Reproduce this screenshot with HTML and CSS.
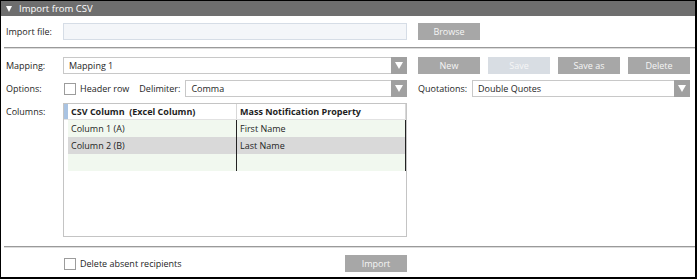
FILE: index.html
```html
<!DOCTYPE html>
<html lang="en">
<head>
  <meta charset="UTF-8" />
  <title>Import from CSV</title>
  <link rel="stylesheet" href="styles.css">
</head>
<body>
  <div class="panel">
    <!-- header bar -->
    <div class="panel-header"><span class="caret"></span>Import from CSV</div>

    <!-- file row -->
    <div class="row row-file">
      <span class="label">Import file:</span>
      <div class="input wide"></div>
      <button class="btn">Browse</button>
    </div>

    <div class="sep"></div>

    <!-- mapping row -->
    <div class="row row-mapping">
      <span class="label">Mapping:</span>
      <div class="select wide">
        <span class="select-text">Mapping 1</span>
        <span class="arrow"></span>
      </div>
      <div class="btn-group">
        <button class="btn">New</button>
        <button class="btn disabled">Save</button>
        <button class="btn">Save as</button>
        <button class="btn">Delete</button>
      </div>
    </div>

    <!-- options row -->
    <div class="row row-options">
      <span class="label">Options:</span>
      <div class="options-left">
        <span class="check"></span>
        <span class="check-label">Header row</span>
        <span class="delim-label">Delimiter:</span>
        <div class="select delim">
          <span class="select-text">Comma</span>
          <span class="arrow"></span>
        </div>
      </div>
      <span class="quot-label">Quotations:</span>
      <div class="select quot">
        <span class="select-text">Double Quotes</span>
        <span class="arrow"></span>
      </div>
    </div>

    <!-- columns row -->
    <div class="row row-columns">
      <span class="label">Columns:</span>
      <div class="grid">
        <div class="grid-row grid-head">
          <span class="rh"></span>
          <span class="c1">CSV Column&nbsp; (Excel Column)</span>
          <span class="c2">Mass Notification Property</span>
        </div>
        <div class="grid-row alt">
          <span class="rh"></span>
          <span class="c1">Column 1 (A)</span>
          <span class="c2">First Name</span>
        </div>
        <div class="grid-row sel">
          <span class="rh"></span>
          <span class="c1">Column 2 (B)</span>
          <span class="c2">Last Name</span>
        </div>
        <div class="grid-row alt">
          <span class="rh"></span>
          <span class="c1"></span>
          <span class="c2"></span>
        </div>
      </div>
    </div>

    <div class="sep sep-bottom"></div>

    <!-- bottom row -->
    <div class="row row-bottom">
      <span class="label"></span>
      <div class="bottom-left">
        <span class="check"></span>
        <span class="check-label">Delete absent recipients</span>
      </div>
      <button class="btn">Import</button>
    </div>
  </div>
</body>
</html>
```

FILE: styles.css
```css
* {
  box-sizing: border-box;
}

html, body {
  margin: 0;
  padding: 0;
  background: #fff;
  font-family: 'Open Sans', 'Noto Sans', sans-serif;
  font-size: 9px;
  color: #1e1e1e;
}

/* outer frame */
.panel {
  width: 697px;
  height: 279px;
  border: 1px solid #000;
  border-right-width: 2px;
  border-bottom-width: 2px;
}

.panel-header {
  display: flex;
  align-items: center;
  height: 15px;
  background: #6e6e6e;
  color: #fff;
  font-size: 9.5px;
  padding-left: 5px;
}

.caret {
  width: 0;
  height: 0;
  border-left: 3.5px solid transparent;
  border-right: 3.5px solid transparent;
  border-top: 6px solid #fff;
  margin-right: 7px;
}

/* generic row */
.row {
  display: flex;
  align-items: center;
  height: 17px;
  white-space: nowrap;
}

.label {
  width: 62px;
  flex: none;
  padding-left: 5px;
}

.row-file {
  margin-top: 7px;
}

.input,
.select {
  height: 17px;
  border: 1px solid #c8c8c8;
  background: #fff;
  flex: none;
}

.input {
  background: #f4f6f9;
  border-color: #d6dde6;
}

.wide {
  width: 344px;
}

/* buttons */
.btn {
  width: 62px;
  height: 17px;
  flex: none;
  margin-left: 11px;
  border: none;
  background: #a7a7a7;
  color: #f6f6f6;
  font-family: inherit;
  font-size: 9px;
  padding: 0;
}

.btn.disabled {
  background: #d8dde3;
}

.btn-group {
  display: flex;
  gap: 8px;
  margin-left: 11px;
}

.btn-group .btn {
  margin-left: 0;
}

/* select */
.select {
  display: flex;
  align-items: center;
}

.select-text {
  flex: 1;
  padding-left: 5px;
}

.arrow {
  width: 16px;
  height: 17px;
  margin: -1px -1px -1px 0;
  background: #a0a0a0;
  display: flex;
  align-items: center;
  justify-content: center;
}

.arrow::after {
  content: "";
  border-left: 4.5px solid transparent;
  border-right: 4.5px solid transparent;
  border-top: 7px solid #fff;
}

/* separators */
.sep {
  margin: 7px 0 0 3px;
  height: 2px;
  border-top: 1px solid #9a9a9a;
  border-bottom: 1px solid #dcdcdc;
}

.row-mapping {
  margin-top: 8px;
}

.row-options {
  margin-top: 6px;
}

.options-left {
  display: flex;
  align-items: center;
  width: 344px;
  flex: none;
}

.check {
  width: 12px;
  height: 12px;
  border: 1px solid #9c9c9c;
  background: #fff;
  flex: none;
  margin-left: 1px;
}

.check-label {
  margin-left: 4px;
}

.delim-label {
  margin-left: 10px;
  margin-right: 5px;
}

.delim {
  flex: 1;
}

.quot-label {
  margin-left: 11px;
  width: 54px;
  flex: none;
}

.quot {
  width: 218px;
}

/* columns grid */
.row-columns {
  margin-top: 6px;
  height: auto;
  align-items: flex-start;
}

.row-columns .label {
  padding-top: 2px;
}

.grid {
  width: 344px;
  height: 134px;
  border: 1px solid #c4c4c4;
  flex: none;
}

.grid-row {
  display: flex;
  height: 17px;
  line-height: 17px;
}

.grid-head {
  height: 16px;
  line-height: 16px;
  font-weight: bold;
  border-bottom: 1px solid #e2e2e2;
}

.rh {
  width: 4px;
  flex: none;
}

.grid-head .rh {
  background: #a9c3e2;
}

.c1 {
  width: 169px;
  flex: none;
  padding-left: 3px;
  border-right: 1px solid #222;
}

.c2 {
  flex: 1;
  padding-left: 3px;
  border-right: 1px solid #222;
}

.grid-head .c1,
.grid-head .c2 {
  border-right-color: #d8d8d8;
}

.alt .c1,
.alt .c2 {
  background: #f1f8ef;
}

.sel .c1,
.sel .c2 {
  background: #d9d9d9;
}

.sep-bottom {
  margin-top: 9px;
}

/* bottom row */
.row-bottom {
  margin-top: 7px;
}

.bottom-left {
  display: flex;
  align-items: center;
  width: 271px;
  flex: none;
}

.row-bottom .btn {
  margin-left: 11px;
}
```
